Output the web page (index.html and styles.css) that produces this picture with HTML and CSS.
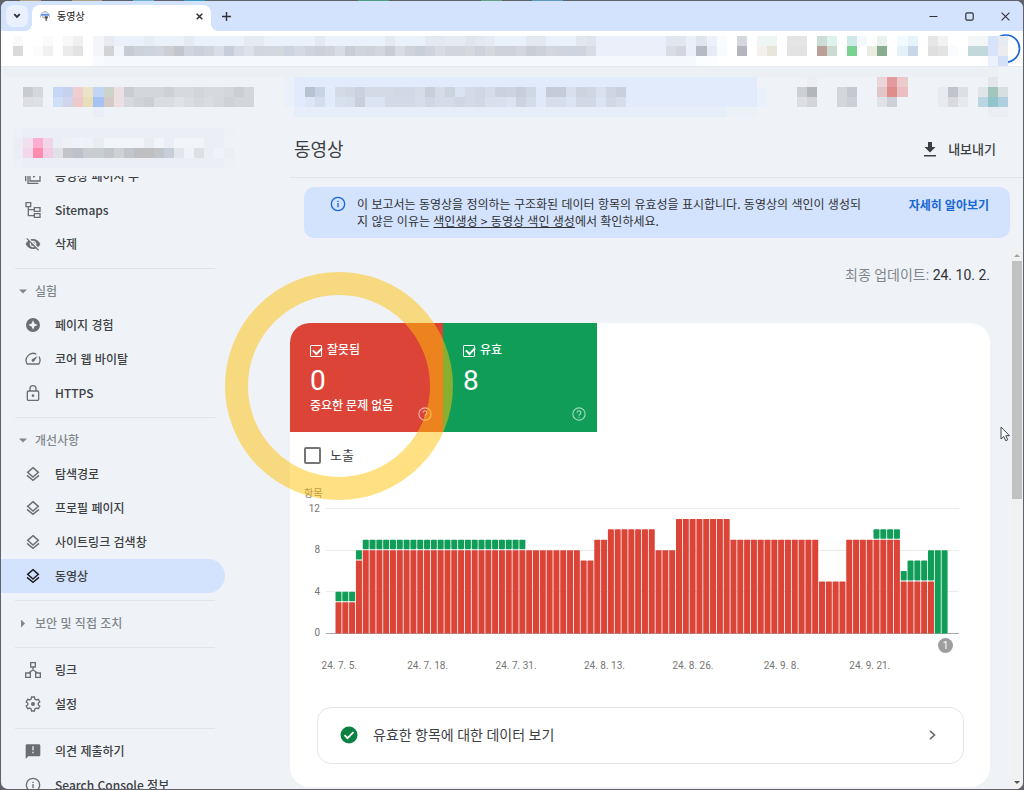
FILE: index.html
```
<!DOCTYPE html>
<html lang="ko">
<head>
<meta charset="utf-8">
<title>동영상</title>
<link rel="stylesheet" href="styles.css">
</head>
<body>
<svg class="defs" aria-hidden="true">
  <symbol id="layers" viewBox="0 0 24 24"><path d="M12 2.500 20 9.500 12 16.500 4 9.500zM3 14 12 21.500 21 14" fill="none" stroke="currentColor" stroke-width="2.200"/></symbol>
  <symbol id="info" viewBox="0 0 24 24"><circle cx="12" cy="12" r="10" fill="none" stroke="currentColor" stroke-width="2"/><path d="M11 10.500h2V17h-2zM11 7h2v2h-2z" fill="currentColor"/></symbol>
  <symbol id="help" viewBox="0 0 24 24"><circle cx="12" cy="12" r="10.500" fill="none" stroke="currentColor" stroke-width="2"/><path d="M8.800 9.800a3.200 3.200 0 1 1 5 2.600c-1.200.8-1.800 1.400-1.800 2.800" fill="none" stroke="currentColor" stroke-width="2"/><path d="M11 16.500h2v2h-2z" fill="currentColor"/></symbol>
</svg>
<div class="window">
  <header class="tabstrip">
    <button class="tab-search" aria-label="탭 검색"><svg width="8" height="6" viewBox="0 0 8 6"><path d="M1.200 1.200 4 4 6.800 1.200" fill="none" stroke="#303134" stroke-width="1.800"/></svg></button>
    <div class="tab">
      <svg width="10" height="10" viewBox="0 0 10 10"><path d="M2 2.500 3.500.8h3L8 2.500" fill="none" stroke="#9aa0a6"/><path d="M1 2.800h8v2H1z" fill="#5c93ee"/><path d="M0 3.500h1v3H0zM9 3.500h1v3H9zM2 5.200h2.500v2.800L2 6.500z" fill="#b6bbc2"/><path d="M4.800 5.200h3v1.800l-1 1V10H5.600V8l-.8-1z" fill="#4a4d52"/></svg>
      <span class="tab-title">동영상</span>
      <button class="tab-close" aria-label="탭 닫기"><svg width="7" height="7" viewBox="0 0 7 7"><path d="m.7.7 5.600 5.600m0-5.600L.7 6.300" stroke="#303134" stroke-width="1.500"/></svg></button>
    </div>
    <button class="tab-new" aria-label="새 탭"><svg width="9" height="9" viewBox="0 0 9 9"><path d="M4.500 0v9M0 4.500h9" stroke="#303134" stroke-width="1.400"/></svg></button>
    <div class="controls">
      <button aria-label="최소화"><svg width="9" height="9" viewBox="0 0 9 9"><path d="M.5 4.500h8" stroke="#303134"/></svg></button>
      <button aria-label="최대화"><svg width="9" height="9" viewBox="0 0 9 9"><rect x=".8" y=".8" width="7.400" height="7.400" rx="1.500" fill="none" stroke="#303134" stroke-width="1.200"/></svg></button>
      <button aria-label="닫기"><svg width="9" height="9" viewBox="0 0 9 9"><path d="m.6.6 7.800 7.800m0-7.800L.6 8.400" stroke="#303134" stroke-width="1.100"/></svg></button>
    </div>
  </header>
  <div class="toolbar"><svg class="mosaic" data-mosaic="toolbar" aria-hidden="true"><circle cx="1005" cy="17.500" r="13.500" fill="none" stroke="#1f66d8" stroke-width="1.700"/></svg></div>
  <div class="appbar"><svg class="mosaic" data-mosaic="appbar" aria-hidden="true"></svg></div>
  <div class="page">
    <aside class="sidebar">
      <div class="property"><svg class="mosaic" data-mosaic="property" aria-hidden="true"></svg></div>
      <nav>
        <ul class="first">
          <li><a href="#"><svg viewBox="0 0 24 24"><path d="M7.500 1h15v18.500h-15zM4.500 5v18H20M1 7v13" fill="none" stroke="currentColor" stroke-width="2"/><path d="m12 6 6 4.500-6 4.500z" fill="currentColor"/></svg>동영상 페이지 수</a></li>
          <li><a href="#"><svg viewBox="0 0 24 24"><path d="M1.500 1h7v6h-7zM14 8.500h8.500v5.500H14zM14 17.500h8.500V23H14zM5 7v13.500h9M5 11.500h9" fill="none" stroke="currentColor" stroke-width="2"/></svg>Sitemaps</a></li>
          <li><a href="#"><svg viewBox="0 0 24 24"><path d="M12 7c2.760 0 5 2.240 5 5 0 .65-.13 1.260-.36 1.830l2.920 2.920c1.510-1.260 2.700-2.890 3.430-4.750-1.730-4.390-6-7.500-11-7.500-1.400 0-2.740.25-3.980.7l2.160 2.160C10.740 7.130 11.350 7 12 7zM2 4.270l2.280 2.280.46.46C3.080 8.300 1.780 10.020 1 12c1.730 4.390 6 7.500 11 7.500 1.550 0 3.030-.3 4.380-.84l.42.42L19.730 22 21 20.730 3.270 3 2 4.270zM7.530 9.800l1.550 1.550c-.05.21-.08.43-.08.65 0 1.660 1.340 3 3 3 .22 0 .44-.03.65-.08l1.550 1.550c-.67.33-1.410.53-2.200.53-2.760 0-5-2.240-5-5 0-.79.2-1.530.53-2.200zm4.310-.78 3.150 3.150.02-.16c0-1.660-1.340-3-3-3l-.17.01z" fill="currentColor"/></svg>삭제</a></li>
        </ul>
        <ul>
          <li><button class="section"><i class="caret down"></i>실험</button></li>
          <li><a href="#"><svg viewBox="0 0 24 24"><path fill-rule="evenodd" d="M12 1.500a10.500 10.500 0 1 0 0 21 10.500 10.500 0 0 0 0-21zm0 3.500 2.200 4.800L19 12l-4.800 2.200L12 19l-2.200-4.800L5 12l4.800-2.200z" fill="currentColor"/></svg>페이지 경험</a></li>
          <li><a href="#"><svg viewBox="0 0 24 24"><path d="M17 4.800A10.500 10.500 0 0 0 3.200 19.500h17.600A10.500 10.500 0 0 0 21 8.500" fill="none" stroke="currentColor" stroke-width="2"/><path d="M19 7.500 13.800 15.500a2.300 2.300 0 1 1-3.300-3.300z" fill="currentColor"/></svg>코어 웹 바이탈</a></li>
          <li><a href="#"><svg viewBox="0 0 20 24"><path d="M3 9h14q1.500 0 1.500 1.500v11q0 1.500-1.500 1.500H3q-1.500 0-1.500-1.500v-11Q1.500 9 3 9zM5.500 9V5.500a4.500 4.500 0 0 1 9 0V9" fill="none" stroke="currentColor" stroke-width="2"/><circle cx="10" cy="16" r="2" fill="currentColor"/></svg>HTTPS</a></li>
        </ul>
        <ul>
          <li><button class="section"><i class="caret down"></i>개선사항</button></li>
          <li><a href="#"><svg><use href="#layers"/></svg>탐색경로</a></li>
          <li><a href="#"><svg><use href="#layers"/></svg>프로필 페이지</a></li>
          <li><a href="#"><svg><use href="#layers"/></svg>사이트링크 검색창</a></li>
          <li><a href="#" class="active" aria-current="page"><svg><use href="#layers"/></svg>동영상</a></li>
        </ul>
        <ul>
          <li><button class="section"><i class="caret right"></i>보안 및 직접 조치</button></li>
        </ul>
        <ul>
          <li><a href="#"><svg viewBox="0 0 24 24"><path d="M8.500 1h7v6.500h-7zM1 16.500h7V23H1zM16 16.500h7V23h-7zM12 7.500V12M5 16.500 12 12l7 4.500" fill="none" stroke="currentColor" stroke-width="2"/></svg>링크</a></li>
          <li><a href="#"><svg viewBox="0 0 24 24"><path d="M9.800 1.500h4.400l.7 3.200 2 1.200 3.100-1 2.200 3.800-2.400 2.200v2.200l2.400 2.200-2.200 3.800-3.100-1-2 1.200-.7 3.200H9.800l-.7-3.200-2-1.200-3.100 1-2.200-3.800 2.400-2.200v-2.200L1.800 8.700 4 4.900l3.100 1 2-1.200z" fill="none" stroke="currentColor" stroke-width="2"/><circle cx="12" cy="12" r="3" fill="currentColor"/></svg>설정</a></li>
        </ul>
        <ul>
          <li><a href="#"><svg viewBox="0 0 24 24"><path fill-rule="evenodd" d="M3 2h18a2 2 0 0 1 2 2v14a2 2 0 0 1-2 2H5l-4 4V4a2 2 0 0 1 2-2zm8 3v6h2V5zm0 8v2.500h2V13z" fill="currentColor"/></svg>의견 제출하기</a></li>
          <li><a href="#"><svg><use href="#info"/></svg>Search Console 정보</a></li>
        </ul>
      </nav>
    </aside>
    <main>
      <div class="titlebar">
        <h1>동영상</h1>
        <button class="export"><svg width="12" height="15" viewBox="0 0 12 15"><path d="M4 0h4v5h3.500L6 10.500.5 5H4zM0 13h12v1.500H0z" fill="#3c4043"/></svg>내보내기</button>
      </div>
      <section class="banner">
        <svg class="banner-icon"><use href="#info"/></svg>
        <p>이 보고서는 동영상을 정의하는 구조화된 데이터 항목의 유효성을 표시합니다. 동영상의 색인이 생성되<br>지 않은 이유는 <a href="#">색인생성 &gt; 동영상 색인 생성</a>에서 확인하세요.</p>
        <a class="more" href="#">자세히 알아보기</a>
      </section>
      <div class="scroller">
        <div class="content">
          <p class="updated">최종 업데이트: <b>24. 10. 2.</b></p>
          <section class="card">
            <div class="tiles">
              <div class="tile bad">
                <label><input type="checkbox" checked>잘못됨</label>
                <strong>0</strong>
                <span>중요한 문제 없음</span>
                <button aria-label="도움말"><svg><use href="#help"/></svg></button>
              </div>
              <div class="tile good">
                <label><input type="checkbox" checked>유효</label>
                <strong>8</strong>
                <button aria-label="도움말"><svg><use href="#help"/></svg></button>
              </div>
            </div>
            <label class="impressions"><input type="checkbox">노출</label>
            <div class="axis-title">항목</div>
            <div class="chart">
              <div class="y-axis"><span>12</span><span>8</span><span>4</span><span>0</span></div>
              <svg class="plot" id="plot" viewBox="0 0 633 126" preserveAspectRatio="none" role="img" aria-label="항목 차트"></svg>
            </div>
            <div class="markers"><span>1</span></div>
            <div class="x-axis"><span>24. 7. 5.</span><span>24. 7. 18.</span><span>24. 7. 31.</span><span>24. 8. 13.</span><span>24. 8. 26.</span><span>24. 9. 8.</span><span>24. 9. 21.</span></div>
            <button class="data-link">
              <svg width="18" height="18" viewBox="0 0 18 18"><circle cx="9" cy="9" r="8.500" fill="#0b8043"/><path d="m4.500 9.200 3 3 6-6" fill="none" stroke="#fff" stroke-width="1.700"/></svg>
              <span>유효한 항목에 대한 데이터 보기</span>
              <svg width="7" height="10" viewBox="0 0 7 10"><path d="m1 .8 4.500 4.200L1 9.200" fill="none" stroke="#6b6f74" stroke-width="1.700"/></svg>
            </button>
          </section>
        </div>
        <div class="scrollbar" aria-hidden="true"><i class="up"></i><i class="thumb"></i><i class="dn"></i></div>
      </div>
    </main>
  </div>
</div>
<div class="ring"></div>
<svg class="cursor" width="11" height="16" viewBox="0 0 11 16" aria-hidden="true"><path d="M1 1v12l2.800-2.500 1.900 4.200 2-.9-1.900-4.100H9.500z" fill="#fff" stroke="#40444f"/></svg>
<script src="main.js"></script>
</body>
</html>
```
FILE: styles.css
```
* { box-sizing: border-box; }
body {
  margin: 0;
  height: 100vh;
  padding: 1px;
  overflow: hidden;
  background: #606269 linear-gradient(90deg, #606269 2%, #b0a184 2% 4%, #606269 4% 7%, #b0a184 7% 10%, #606269 10% 13%, #6fb0d8 13% 15%, #606269 15% 18%, #3a9ac8 18% 20%, #606269 20% 35%, #4f9c86 35% 38%, #606269 38% 47%, #5fa080 47% 49%, #606269 49% 52%, #5a97bd 52% 55%, #606269 55% 70%, #606269) no-repeat 0 0 / 100% 1px;
  font: 12px/17px Roboto, "Noto Sans CJK KR", sans-serif;
  color: #3c4043;
}
button { border: 0; padding: 0; background: none; font: inherit; color: inherit; }
a { color: inherit; }
ul, p, h1 { margin: 0; padding: 0; list-style: none; }
svg { display: block; flex: none; }
.defs { position: absolute; width: 0; height: 0; }
.window { height: 100%; display: flex; flex-direction: column; overflow: hidden; border-radius: 7px; background: #eff3f8; }

.tabstrip { display: flex; height: 30px; flex: none; background: #d3e3fd; padding-left: 5px; }
.tabstrip button { display: grid; place-items: center; }
.tab-search { width: 22px; height: 22px; margin-top: 4px; border-radius: 7px; background: #e9f0fe; }
.tab { position: relative; display: flex; align-items: center; gap: 7px; width: 179px; margin: 4px 0 0 4px; padding: 0 6px 4px 8px; border-radius: 8px 8px 0 0; background: #fff; }
.tab::before, .tab::after { content: ""; position: absolute; bottom: 0; width: 8px; height: 8px; }
.tab::before { left: -8px; background: radial-gradient(circle at 0 0, transparent 8px, #fff 8px); }
.tab::after { right: -8px; background: radial-gradient(circle at 100% 0, transparent 8px, #fff 8px); }
.tab-title { flex: 1; font-size: 10px; color: #202124; }
.tab-close { width: 12px; height: 16px; }
.tab-new { width: 30px; }
.controls { display: flex; margin-left: auto; }
.controls button { width: 36px; }

.toolbar { height: 36px; flex: none; background: #fff; border-bottom: 1px solid #e6e9ee; }
.appbar { height: 51px; flex: none; }
.mosaic { width: 100%; height: 100%; shape-rendering: crispEdges; }
.mosaic circle { shape-rendering: auto; }

.page { flex: 1; display: flex; min-height: 0; }
.sidebar { width: 289px; flex: none; display: flex; flex-direction: column; }
.property { height: 58px; flex: none; }
nav { flex: 1; overflow: hidden; font-family: "Noto Sans CJK KR", sans-serif; font-weight: 500; }
.first { margin-top: -17px; }
nav ul + ul { margin-top: 7px; padding-top: 6px; position: relative; }
nav ul + ul::before { content: ""; position: absolute; top: 0; left: 14px; width: 200px; height: 1px; background: #e1e4e8; }
nav a { display: flex; align-items: center; gap: 14px; height: 34px; width: 224px; padding: 0 0 1px 24px; text-decoration: none; }
nav a svg { width: 16px; height: 16px; margin-top: 1px; color: #6b6f74; }
nav a.active { background: #d3e3fd; border-radius: 0 17px 17px 0; }
nav a.active svg { color: #202124; }
.section { display: flex; align-items: center; height: 34px; padding: 0 0 1px 18px; gap: 8px; color: #80868b; font-weight: 500; }
.caret { width: 8px; height: 8px; margin-top: 2px; background: #80868b; }
.caret.down { clip-path: polygon(0 25%, 100% 25%, 50% 75%); }
.caret.right { clip-path: polygon(25% 0, 75% 50%, 25% 100%); }

main { flex: 1; min-width: 0; display: flex; flex-direction: column; }
.titlebar { display: flex; align-items: center; justify-content: space-between; height: 60px; flex: none; padding: 4px 27px 0 4px; border-bottom: 1px solid #e1e4e8; }
h1 { font-size: 18px; line-height: 26px; font-weight: 400; color: #3c4043; }
.export { display: flex; align-items: center; gap: 12px; font-size: 13px; font-weight: 500; }
.banner { display: flex; margin: 9px 13px 10px 14px; padding: 8px 21px 9px 26px; border-radius: 10px; background: #d3e3fd; color: #303134; }
.banner-icon { width: 16px; height: 16px; margin: 1px 11px 0 0; color: #1967d2; }
.banner p { flex: 1; white-space: nowrap; font-family: "Noto Sans CJK KR", sans-serif; }
.more { padding-top: 3px; color: #1967d2; font-weight: 700; text-decoration: none; }
.scroller { flex: 1; min-height: 0; display: flex; gap: 21px; overflow: hidden; }
.content { flex: 1; }
.updated { padding: 17px 0 38px; text-align: right; font-size: 14px; line-height: 20px; color: #80868b; }
.updated b { font-weight: 400; color: #303134; }
.scrollbar { width: 12px; display: flex; flex-direction: column; align-items: center; background: #f1f1f1; }
.scrollbar .up, .scrollbar .dn { width: 6px; height: 3px; margin: 6px 0 4px; background: #a3a3a3; clip-path: polygon(50% 0, 100% 100%, 0 100%); }
.scrollbar .dn { margin: auto 0 5px; background: #505050; clip-path: polygon(0 0, 100% 0, 50% 100%); }
.scrollbar .thumb { width: 10px; height: 44%; background: #c1c1c1; }

.card { border-radius: 20px; background: #fff; overflow: hidden; padding-bottom: 23px; }
.tiles { display: flex; color: #fff; }
.tile { position: relative; width: 153px; height: 109px; padding: 19px 20px 0; display: flex; flex-direction: column; font-weight: 500; }
.bad { background: #db4437; }
.good { background: #0f9d58; width: 154px; }
.tile label { display: flex; align-items: center; gap: 5px; }
.tile strong { font-size: 28px; line-height: 34px; margin-top: 5px; font-weight: 400; }
.tile button { position: absolute; right: 11px; bottom: 11px; color: rgba(255, 255, 255, .6); }
.tile svg { width: 14px; height: 14px; }
input { appearance: none; margin: 0; position: relative; }
.tile input { width: 12px; height: 12px; border: 1px solid #fff; border-radius: 1px; }
.tile input:checked::after { content: ""; position: absolute; left: 2px; top: 1px; width: 7px; height: 4px; border: solid #fff; border-width: 0 0 2px 2px; transform: rotate(-45deg); }
.impressions { display: flex; align-items: center; gap: 9px; height: 46px; padding-left: 14px; font-size: 13px; }
.impressions input { width: 17px; height: 17px; border: 2px solid #757575; border-radius: 2px; }
.axis-title { padding: 8px 14px 0; font-size: 10px; line-height: 16px; color: #757575; }
.chart { display: flex; gap: 6px; height: 138px; padding-right: 31px; }
.y-axis { width: 30px; display: flex; flex-direction: column; justify-content: space-between; text-align: right; font-size: 10px; line-height: 14px; color: #757575; }
.plot { flex: 1; min-width: 0; height: 126px; margin-top: 6px; }
.grid { fill: #ebebeb; shape-rendering: crispEdges; }
.axis { fill: #aaa; shape-rendering: crispEdges; }
.red { fill: #db4437; }
.green { fill: #0f9d58; }
.markers { display: flex; justify-content: flex-end; margin-top: -2px; padding-right: 37px; }
.markers span { width: 15px; height: 15px; border-radius: 50%; background: #9e9e9e; color: #fff; font-size: 10px; line-height: 15px; text-align: center; }
.x-axis { display: grid; grid-template-columns: repeat(7, 1fr); padding: 6px 76px 0 5px; text-align: center; font-size: 10px; line-height: 14px; color: #757575; }
.data-link { display: flex; align-items: center; width: calc(100% - 53px); height: 57px; margin: 34px 26px 0 27px; padding: 0 27px 1px 22px; border: 1px solid #e3e5e8; border-radius: 14px; font-size: 14px; text-align: left; color: #3c4043; }
.data-link span { flex: 1; margin-left: 15px; }

.ring { position: absolute; left: 225px; top: 272px; width: 228px; height: 228px; border: 23px solid rgba(255, 193, 7, .5); border-radius: 50%; }
.cursor { position: absolute; left: 1000px; top: 426px; }
```
FILE: main.js
```
const NS = 'http://www.w3.org/2000/svg';
function rect(parent, x, y, w, h, attrs) {
  const r = document.createElementNS(NS, 'rect');
  Object.entries({ x, y, width: w, height: h, ...attrs }).forEach(([k, v]) => r.setAttribute(k, v));
  parent.appendChild(r);
}

// Each entry: row, first column, colours of the following cells ("-" skips, "colour*n" repeats).
const mosaics = {
  toolbar: { top: 5, rows: [
    [0, 1, 'fafafa - - fbfbfb - f8f8f8 f0f0f0 - f3f5fa e8eaef eaf1fb*48 ebeffa*12'],
    [0, 14, 'e6edf5'], [0, 18, 'e5eaf3'], [0, 24, 'e5eaf3*2'], [0, 31, 'e4e9f1'], [0, 38, 'e5e9f2'],
    [0, 42, 'e4e8f1*2 e6eaf2*2 e1e5ed e4e8f0 e6eaf3'], [0, 52, 'e4e8f1*2'], [0, 57, 'e3e7ef e0e4ec'],
    [0, 66, 'e2e6ef*2 ebeffa e1e5ee edf1fc f9fbfe'],
    [0, 73, 'd4d7dd'], [0, 75, 'eff5f3 eef5f2'], [0, 78, 'e5e5e5*2'], [0, 81, 'cbddd4 dff3ec'],
    [0, 84, 'cfe9e7 f3f9ff'], [0, 87, 'ebf1ed'], [0, 89, 'f0faff e5f3fb'], [0, 92, 'e6e6e6 f2f2f2'],
    [0, 96, 'f3f6f7*2 d6e3f9 e5eaf3'],
    [1, 1, 'dadada - fcfcfc f0f0f0 - ebebeb e3e3e3 - f3f5fa d3d3d4 f0f5fc c5ccd4 cdd2d9 ccd5dd d0d5dd ccced4 c3c5cb cfd5df cbd0da cfd4db d8dde6 c7cedb d5dae4 dde1ea d3d7dd d3d8de*2 cbd4e0 d5d9e2 ced3dd ccd0da d0d3dc d8dce4 c9cdd4 d0d4db ced2d9 d3d6dc c9cdd3 d8dbe2 cfd3d9 c7cfd8 cfd3dc d8dbe3 d2d5dc*2 d5d8dd cfd2da d5d8dd cfd2da*2 d3d6dc'],
    [1, 52, 'cacdd6 cdd1d9 d3d6dc d0d4dc ccd5e0 cfd4dd d8dce3 ebeffa*7'],
    [1, 66, 'd9dde4 d3d6de ebeffa b7bac3 e7ebf5 f8fbfe'],
    [1, 73, 'b3b6bd'], [1, 75, 'f5f0ee e8e6da'], [1, 78, 'e3e3e3*2'], [1, 81, 'bba097 cbdbd4'],
    [1, 84, '79d290'], [1, 86, 'eaece0 8aac91'], [1, 89, 'e5f1f8 c7d9e8'], [1, 92, 'dfdfdf e3e3e3 f9fbfe'],
    [1, 96, 'c3d8db*2 d6e3f9 ececee'],
    [2, 9, 'fafbfe f5f8fd*59 fbfdfe*2'], [2, 98, 'ebf1fd d3e0f8']
  ] },
  appbar: { top: 0, rows: [
    [0, 0, 'ecf0f5*99'],
    [1, 28, 'ecf1f9 e2ebfc*46'],
    [1, 80, 'eceef3'], [1, 87, 'ebd5d9 e59b9d ebcacc'], [1, 98, 'e3e7ea'],
    [2, 28, 'eaf1fb e2ebfc*46 ebf1fb'], [3, 28, 'eaf1fb e2ebfc*46 ebf1fb'],
    [2, 2, 'c8cbd0 d4d7dc - c5d6f6 c6d1ee efcdd0 ece3c8 c3d5f4 ccd3c8 ecdfe3 c9ccd1 d3d6db*3 cdd0d5 d6d9de*2 d2d5da d6d9de*2 d3d6db cbced3 d3d6db'],
    [2, 30, 'b8c3d1 c8d3e5 - d3dbe6 d0d8e3 cad2df d3dbe6*3 d1d9e6*2 d5dde9 c7cfdb d4dce8 cbd3df dae3f1 d3dbe8 cfd7e4 d5ddeb cbd2df cdd4e0 c7cedb d0d7e4 e0e9f9 c5cbd8*2 d8e0ee cdd4e0 d0d7e4 d9e0ee cfd6e1 c8cfdd'],
    [2, 79, 'cdcfd3 b3b6bb'], [2, 83, 'd3d6db c5c8ce'], [2, 87, 'e1c5c9 de8d8a ebbfc1'], [2, 93, 'e7eaef c0c3c9 dddfe5'], [2, 97, 'dfe5e8 a2c5bc d8dfe2'],
    [3, 2, 'dcdee3 dde0e5 - cfdff6 cfd5ea eec9c9 e8dfb9 a6c2f2 d6cac6 ecdfe3 d5d8dd d0d3d8 cccfd4 d9dce1*2 dfe2e7 d9dce1 d5d8dd d9dce1 d5d8dd cfd2d7 d2d5da*2'],
    [3, 30, 'dce6f6 d2ddee - d6e0ee d6deeb c9cedb dbe4f3*2 d2dae8*3 d6deeb cfd7e4 d4dce9*2 cfd7e4 d3dbe8 d1d9e6 d8e0ee*2 dbe4f3 ccd4e1 d4dce9 e0e9f9 d6deeb*2 dbe4f3 d1d9e6*2 dbe4f3 d1d9e6 d6deeb'],
    [3, 79, 'dcdee2 d3d5da'], [3, 83, 'd3d6db cccfd5'], [3, 87, 'e0e2e8 cdd0d6'], [3, 93, 'e7eaef d8dae0 e7e9ee'], [3, 97, 'bbd6e3 92c4cb afcedf'],
    [4, 9, 'e9eef8'], [4, 29, 'e6eef9*43 ecf1f8*3'], [4, 98, 'ebeef3*2']
  ] },
  property: { top: 10, rows: [
    [0, 1, 'edf0f5 ebeef4*20 eef1f6'],
    [1, 1, 'ebeef4 f2dfec fbaed0 f2d6e8 ebeef4 eef1f6 eef2fb eef1f6 e9ecf1 f1f4f9*4 e9ecf1 f1f4f9 ebeef4 f1f4f9*3 ebeef4*2'],
    [2, 1, 'ebeef4 f3d6e9 fd8cae f3cbe4 dfe2e7 c3c4c7 bcc1cb c9ccd0 c7ced0 c3c6ca cfd1d5 c1c5ce bfbfc1*2 c1c5ca c7ced8 e2e5ec - dee0e5 ebeff5 eff3f8 ebeef4'],
    [3, 1, 'edf0f5 ebeef4*20 eef1f6']
  ] }
};
document.querySelectorAll('[data-mosaic]').forEach(svg => {
  const { top, rows } = mosaics[svg.dataset.mosaic];
  rows.forEach(([row, start, cells]) => {
    let col = start;
    cells.split(' ').forEach(cell => {
      const [color, count = 1] = cell.split('*');
      const x = Math.round(2 + col * 10.05);
      const end = Math.round(2 + (col + +count) * 10.05);
      if (color !== '-') rect(svg, x, top + row * 10, end - x, 10, { fill: '#' + color });
      col += +count;
    });
  });
});

// Runs of daily values: days, invalid items, valid items.
const runs = [[3,3,1],[1,7,1],[24,8,1],[8,8,0],[2,7,0],[2,9,0],[7,10,0],[3,8,0],[8,11,0],[13,9,0],[4,5,0],[4,9,0],[4,9,1],[1,5,1],[3,5,2],[1,5,3],[2,0,8]];
const plot = document.getElementById('plot');
const unit = 125 / 12;
[0, 42, 83].forEach(y => rect(plot, 0, y, 633, 1, { class: 'grid' }));
rect(plot, 0, 125, 633, 1, { class: 'axis' });
let day = 0;
runs.forEach(([days, bad, good]) => {
  for (let i = 0; i < days; i++, day++) {
    const x = 9.5 + day * 6.81;
    if (bad) rect(plot, x, 125.5 - bad * unit, 6, bad * unit, { class: 'red', rx: .6 });
    if (good) rect(plot, x, 125.5 - (bad + good) * unit, 6, good * unit - (bad ? 1 : 0), { class: 'green', rx: .8 });
  }
});
```
